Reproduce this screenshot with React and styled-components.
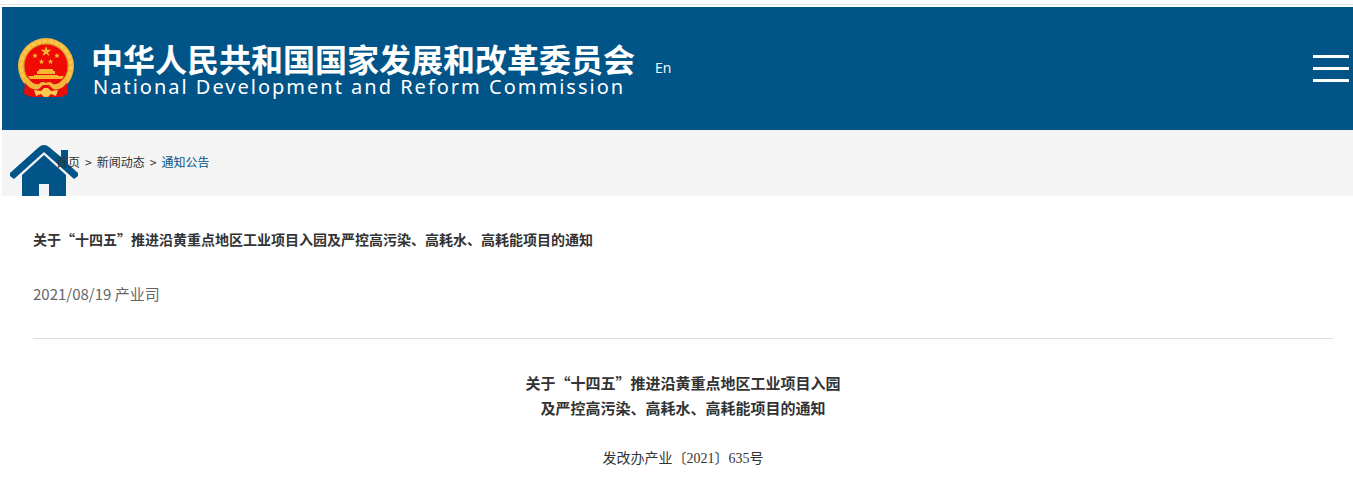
import React from 'react';
import styled, { createGlobalStyle } from 'styled-components';

const GlobalStyle = createGlobalStyle`
  * {
    box-sizing: border-box;
  }

  body {
    margin: 0;
    background-color: #fff;
    color: #333;
    font-family: 'Open Sans', 'Noto Sans CJK SC', sans-serif;
  }
`;

const Page = styled.div`
  padding: 4px 0 0 2px;
`;

const TopLine = styled.div`
  height: 1px;
  margin: 0 0 2px -2px;
  background-color: #e4e4e4;
`;

const Header = styled.header`
  display: flex;
  align-items: center;
  padding: 30px 4px 31px 15px;
  background-color: #005487;
`;

const Brand = styled.a`
  display: flex;
  align-items: center;
  gap: 16px;
  color: #fff;
  text-decoration: none;
`;

const BrandText = styled.div`
  display: flex;
  flex-direction: column;
  gap: 3px;
  padding-top: 3px;
`;

const BrandName = styled.span`
  font-family: 'Noto Sans CJK SC', sans-serif;
  font-size: 32px;
  font-weight: 700;
  line-height: 32px;
`;

const BrandSubName = styled.span`
  padding-left: 2px;
  font-family: 'Noto Sans', sans-serif;
  font-size: 20px;
  line-height: 20px;
  letter-spacing: 2px;
  white-space: nowrap;
`;

const LangLink = styled.a`
  margin-left: 20px;
  color: #fff;
  font-size: 14px;
  line-height: 20px;
  text-decoration: none;
`;

const MenuButton = styled.button`
  display: flex;
  flex-direction: column;
  gap: 9px;
  width: 36px;
  margin-left: auto;
  padding: 0;
  border: 0;
  background: none;
  cursor: pointer;
`;

const MenuBar = styled.span`
  width: 100%;
  height: 3px;
  background-color: #fff;
`;

const Crumbs = styled.nav`
  position: relative;
  display: flex;
  gap: 5px;
  height: 66px;
  padding: 22px 0 0 54px;
  overflow: hidden;
  background-color: #f4f4f4;
  font-family: 'Noto Sans CJK SC', sans-serif;
  font-size: 12px;
  line-height: 20px;
`;

const HomeIcon = styled.svg`
  position: absolute;
  top: 15px;
  left: 8px;
`;

const Crumb = styled.a`
  position: relative;
  color: ${(props) => (props.$current ? '#005487' : '#333')};
  text-decoration: none;
`;

const Article = styled.main`
  padding: 31px 20px 0 31px;
`;

const ArticleHead = styled.div`
  padding-bottom: 32px;
  border-bottom: 1px solid #ddd;
`;

const Title = styled.h1`
  margin: 0 0 31px;
  font-family: 'Noto Sans CJK SC', sans-serif;
  font-size: 14px;
  font-weight: 700;
  line-height: 24px;
`;

const Meta = styled.p`
  margin: 0;
  color: #666;
  font-family: 'Noto Sans CJK SC', sans-serif;
  font-size: 15px;
  line-height: 24px;
`;

const Content = styled.div`
  padding-top: 31px;
  text-align: center;
  line-height: 25px;
`;

const ContentTitle = styled.h2`
  margin: 0 0 26px;
  font-family: 'Noto Sans CJK SC', sans-serif;
  font-size: 15px;
  font-weight: 700;
`;

const DocNumber = styled.p`
  margin: 0;
  font-family: 'Liberation Serif', 'Noto Sans CJK SC', serif;
  font-size: 14px;
`;

const Emblem = () => (
    <svg width="58" height="62" viewBox="0 0 58 62" aria-hidden="true">
        <circle cx="29" cy="29" r="28" fill="#f6b63a" />
        <circle cx="29" cy="29" r="25" fill="none" stroke="#fac94d" strokeWidth="3" strokeDasharray="4 2" />
        <circle cx="29" cy="29" r="22" fill="#ef0a06" stroke="#cf8d24" strokeWidth="1" />
        <g fill="#f8b62e">
            <path d="M29 9 L30.300 12.800 L34.400 12.800 L31.100 15.200 L32.300 19 L29 16.700 L25.700 19 L26.900 15.200 L23.600 12.800 L27.700 12.800 Z" />
            <path d="M18 16 l.8 1.700 1.900 .1 -1.500 1.200 .5 1.900 -1.700 -1 -1.700 1 .5 -1.900 -1.500 -1.200 1.900 -.1z" />
            <path d="M40 16 l.8 1.700 1.900 .1 -1.500 1.200 .5 1.900 -1.700 -1 -1.700 1 .5 -1.900 -1.500 -1.200 1.900 -.1z" />
            <path d="M24.500 22 l.8 1.700 1.900 .1 -1.500 1.200 .5 1.900 -1.700 -1 -1.700 1 .5 -1.900 -1.500 -1.200 1.900 -.1z" />
            <path d="M33.500 22 l.8 1.700 1.900 .1 -1.500 1.200 .5 1.900 -1.700 -1 -1.700 1 .5 -1.900 -1.500 -1.200 1.900 -.1z" />
            <path d="M22 32 H36 V34 H38 V37 H20 V34 H22 Z" />
            <path d="M17 38 H41 V39 H47 L45 42 H13 L11 39 H17 Z" />
        </g>
        <path d="M8 45 L14 43 H44 L50 45 L51 57 L44 60 H14 L7 57 Z" fill="#e60c0a" />
        <path d="M6 42 C10 50 16 54 22 52 L26 48 H32 L36 52 C42 54 48 50 52 42 L47 41 C43 46 40 48 36 47 C33 44 31 45 29 46 C27 45 25 44 22 47 C18 48 15 46 11 41 Z" fill="#f6b63a" />
        <path d="M17 53 L24 54 L27 51 H31 L34 54 L41 53 L39 59 L34 57 L31 60 H27 L24 57 L19 59 Z" fill="#fac94d" />
    </svg>
);

const breadcrumbs = ['首页', '新闻动态', '通知公告'];

const App = () => {
    return (
        <Page>
            <GlobalStyle />
            <TopLine />
            <Header>
                <Brand href="#">
                    <Emblem />
                    <BrandText>
                        <BrandName>中华人民共和国国家发展和改革委员会</BrandName>
                        <BrandSubName>National Development and Reform Commission</BrandSubName>
                    </BrandText>
                </Brand>
                <LangLink href="#">En</LangLink>
                <MenuButton type="button" aria-label="菜单">
                    <MenuBar />
                    <MenuBar />
                    <MenuBar />
                </MenuButton>
            </Header>

            <Crumbs>
                <HomeIcon width="68" height="60" viewBox="0 0 68 60" fill="#005487" aria-hidden="true">
                    <path d="M34 0 Q37 0 39 2 L51 12 V5 H58 V19 L68 28 V31 L64 34 L34 7 L4 34 L0 31 V28 L29 2 Q31 0 34 0 Z" />
                    <path d="M34 10 L56 30 V60 H39 V39 H29 V60 H12 V30 Z" />
                </HomeIcon>
                {breadcrumbs.map((name, index) => (
                    <React.Fragment key={name}>
                        {index > 0 && <span>&gt;</span>}
                        <Crumb href="#" $current={index === breadcrumbs.length - 1}>{name}</Crumb>
                    </React.Fragment>
                ))}
            </Crumbs>

            <Article>
                <ArticleHead>
                    <Title>关于“十四五”推进沿黄重点地区工业项目入园及严控高污染、高耗水、高耗能项目的通知</Title>
                    <Meta>2021/08/19 产业司</Meta>
                </ArticleHead>
                <Content>
                    <ContentTitle>
                        关于“十四五”推进沿黄重点地区工业项目入园
                        <br />
                        及严控高污染、高耗水、高耗能项目的通知
                    </ContentTitle>
                    <DocNumber>发改办产业〔2021〕635号</DocNumber>
                </Content>
            </Article>
        </Page>
    );
};

export default App;
